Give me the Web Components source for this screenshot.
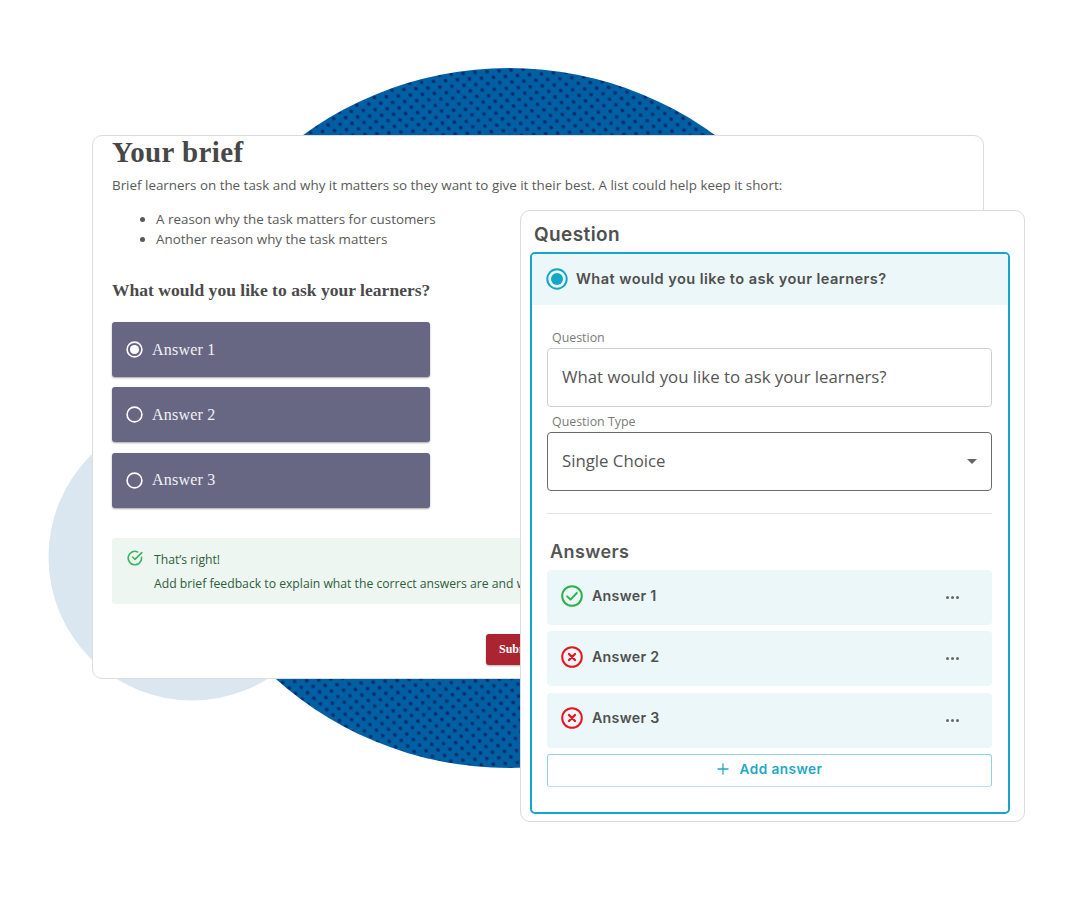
<!DOCTYPE html>
<html><head><meta charset="utf-8">
<style>
html,body{margin:0;padding:0;background:#fff;}
body{width:1067px;height:916px;overflow:hidden;font-family:"Open Sans",sans-serif;color:#4d4d4d;}
</style></head>
<body>
<promo-stage>
  <backdrop-art slot="art"></backdrop-art>
  <brief-card slot="brief"></brief-card>
  <question-card slot="question"></question-card>
</promo-stage>
<template id="tpl-brief">
<style>
:host{display:block;box-sizing:border-box;width:892px;height:544px;background:#fff;border:1px solid #dcdcdc;border-radius:10px;padding:0 19px;overflow:hidden;color:#4a4a4a;}
h1{font:700 29px/32px "Liberation Serif",serif;margin:0;color:#474747;height:32px;letter-spacing:.4px;}
p{margin:7px 0 0;font:400 13.4px/20px "Open Sans",sans-serif;white-space:nowrap;color:#595959;}
ul{margin:14px 0 0;padding:0 0 0 44px;font:400 13.4px/20px "Open Sans",sans-serif;color:#595959;}
h2{font:700 17.5px/22px "Liberation Serif",serif;margin:30px 0 0;color:#4a4a4a;letter-spacing:.03px;}
.opts{display:flex;flex-direction:column;gap:10.25px;margin-top:21px;width:318px;}
.fb{margin-top:30px;box-sizing:border-box;width:860px;height:66px;background:#edf6f0;border-radius:3px;padding:10px 15px;display:grid;grid-template-columns:27px 1fr;color:#2f5c40;font:400 12.2px/24px "Open Sans",sans-serif;white-space:nowrap;}
.fb svg{display:block;margin-top:2px;}
.sub{margin:30px 0 0 374px;width:80px;height:31px;background:#ab2432;border-radius:3px;box-shadow:0 1px 2px rgba(0,0,0,.3);color:#fff;font:700 12px/30px "Liberation Serif",serif;padding-left:13px;box-sizing:border-box;}
</style>
<h1>Your brief</h1>
<p>Brief learners on the task and why it matters so they want to give it their best. A list could help keep it short:</p>
<ul><li>A reason why the task matters for customers</li><li>Another reason why the task matters</li></ul>
<h2>What would you like to ask your learners?</h2>
<div class="opts">
<answer-option selected>Answer 1</answer-option>
<answer-option>Answer 2</answer-option>
<answer-option>Answer 3</answer-option>
</div>
<div class="fb">
<svg width="16" height="16" viewBox="0 0 16 16" fill="none" stroke="#3fb45f" stroke-width="1.6" stroke-linecap="round" stroke-linejoin="round"><path d="M14.6 7.2v.8a6.7 6.7 0 1 1-4-6.1"/><path d="M14.8 2.6 8 9.4 5.6 7"/></svg>
<div>That’s right!</div>
<div></div>
<div>Add brief feedback to explain what the correct answers are and why</div>
</div>
<div class="sub">Submit</div>
</template>
<template id="tpl-option">
<style>
:host{display:flex;align-items:center;box-sizing:border-box;height:55px;background:#676784;border-radius:3px;box-shadow:0 1px 2px rgba(0,0,0,.35);padding-left:14px;gap:9px;color:#f1f1f5;font:400 16px/20px "Liberation Serif",serif;letter-spacing:.2px;}
svg{display:block;flex:none;}
circle.dot{display:none;}
:host([selected]) circle.dot{display:block;}
</style>
<svg width="17" height="17" viewBox="0 0 17 17"><circle cx="8.5" cy="8.5" r="7.4" fill="none" stroke="#fff" stroke-width="1.6"/><circle class="dot" cx="8.5" cy="8.5" r="4.6" fill="#fff"/></svg>
<slot></slot>
</template>
<template id="tpl-question">
<style>
:host{display:block;box-sizing:border-box;width:505px;height:612px;background:#fff;border:1px solid #dcdcdc;border-radius:10px;padding:12px 14px 9px 9px;color:#4f4f4f;}
h3{margin:0;padding-left:4px;font:600 19px/24px "Inter",sans-serif;letter-spacing:.4px;color:#4f4f4f;height:29px;}
.frame{box-sizing:border-box;height:562px;border:2px solid #16a5c6;border-radius:5px;overflow:hidden;}
.head{box-sizing:border-box;height:51px;background:#ebf7f8;display:flex;align-items:center;gap:8px;padding:0 0 2px 14px;font:600 14.6px/20px "Inter",sans-serif;letter-spacing:.43px;color:#4f4f4f;}
.body{padding:0 16px 0 15px;}
.div{height:1px;background:#e2e2e2;margin:22px 0 0;}
h4{margin:26px 0 0;padding-left:3px;font:600 18px/24px "Inter",sans-serif;letter-spacing:.4px;color:#555;height:21px;}
.rows{display:flex;flex-direction:column;gap:6.25px;margin-top:9px;}
.add{box-sizing:border-box;margin-top:6.5px;height:32.5px;border:1px solid #8ed5e5;border-bottom-color:#b5e3ec;border-radius:3px;display:flex;align-items:center;justify-content:center;gap:11px;color:#1ea8c8;font:600 13.6px/20px "Inter",sans-serif;letter-spacing:.45px;padding-bottom:3px;}
svg{display:block;flex:none;}
</style>
<h3>Question</h3>
<div class="frame">
<div class="head"><svg width="22" height="22" viewBox="0 0 22 22"><circle cx="11" cy="11" r="9.7" fill="none" stroke="#16a5c6" stroke-width="2"/><circle cx="11" cy="11" r="6" fill="#16a5c6"/></svg><span>What would you like to ask your learners?</span></div>
<div class="body">
<form-field label="Question" value="What would you like to ask your learners?"></form-field>
<form-field label="Question Type" value="Single Choice" select></form-field>
<div class="div"></div>
<h4>Answers</h4>
<div class="rows">
<answer-row state="ok">Answer 1</answer-row>
<answer-row state="bad">Answer 2</answer-row>
<answer-row state="bad">Answer 3</answer-row>
</div>
<div class="add"><svg width="12" height="12" viewBox="0 0 12 12" stroke="#1ea8c8" stroke-width="1.3" fill="none"><path d="M6 .5v11M.5 6h11"/></svg><span>Add answer</span></div>
</div>
</div>
</template>
<template id="tpl-field">
<style>
:host{display:block;}
label{display:block;padding-left:5px;font:400 12.4px/16px "Open Sans",sans-serif;color:#7a7a7a;height:18px;}
.box{box-sizing:border-box;height:59px;border:1px solid #cfcfcf;border-radius:4px;display:flex;align-items:center;justify-content:space-between;padding:0 14px 2px;font:400 16.8px/22px "Open Sans",sans-serif;color:#555;}
:host([select]) .box{border-color:#6b6b6b;}
:host([select]) label{margin-top:7px;}
:host(:not([select])) label{margin-top:25px;}
.car{display:none;width:0;height:0;border-left:5px solid transparent;border-right:5px solid transparent;border-top:5px solid #666;margin-top:2px;}
:host([select]) .car{display:block;}
</style>
<label></label><div class="box"><span class="v"></span><i class="car"></i></div>
</template>
<template id="tpl-row">
<style>
:host{display:flex;align-items:flex-start;box-sizing:border-box;height:55px;background:#ebf7f8;border-radius:4px;padding:14.5px 0 0 14px;gap:9px;font:600 14.2px/22px "Inter",sans-serif;letter-spacing:.3px;color:#4f4f4f;}
svg{display:block;flex:none;}
.txt{flex:1;}
.more{margin-right:33px;display:flex;gap:2px;margin-top:11.5px;}
.more i{width:3px;height:3px;border-radius:50%;background:#666;display:block;}
</style>
<span class="ic"></span><span class="txt"><slot></slot></span><span class="more"><i></i><i></i><i></i></span>
</template>
<script>
const tpl=id=>document.getElementById(id).content.cloneNode(true);
class PromoStage extends HTMLElement{constructor(){super();this.attachShadow({mode:'open'}).innerHTML=`<style>
:host{display:block;position:relative;width:1067px;height:916px;overflow:hidden;}
::slotted([slot=art]){position:absolute;left:0;top:0;}
::slotted([slot=brief]){position:absolute;left:92px;top:135px;}
::slotted([slot=question]){position:absolute;left:520px;top:210px;}
</style><slot name="art"></slot><slot name="brief"></slot><slot name="question"></slot>`;}}
class BackdropArt extends HTMLElement{constructor(){super();this.attachShadow({mode:'open'}).innerHTML=`<style>:host{display:block;width:1067px;height:916px;}svg{display:block;}</style>
<svg width="1067" height="916" viewBox="0 0 1067 916"><defs><pattern id="d" width="8.5" height="8.5" patternUnits="userSpaceOnUse" patternTransform="translate(512.3 88) rotate(41)"><rect width="8.5" height="8.5" fill="#0060a3"/><circle cx="4.25" cy="4.25" r="2" fill="#0a2f6e"/></pattern></defs>
<circle cx="192" cy="557" r="143.5" fill="#dae7f1"/><circle cx="509" cy="418" r="350" fill="url(#d)"/></svg>`;}}
class BriefCard extends HTMLElement{constructor(){super();this.attachShadow({mode:'open'}).appendChild(tpl('tpl-brief'));}}
class AnswerOption extends HTMLElement{constructor(){super();this.attachShadow({mode:'open'}).appendChild(tpl('tpl-option'));}}
class QuestionCard extends HTMLElement{constructor(){super();this.attachShadow({mode:'open'}).appendChild(tpl('tpl-question'));}}
class FormField extends HTMLElement{connectedCallback(){if(this.shadowRoot)return;const s=this.attachShadow({mode:'open'});s.appendChild(tpl('tpl-field'));s.querySelector('label').textContent=this.getAttribute('label');s.querySelector('.v').textContent=this.getAttribute('value');}}
class AnswerRow extends HTMLElement{connectedCallback(){if(this.shadowRoot)return;const s=this.attachShadow({mode:'open'});s.appendChild(tpl('tpl-row'));
s.querySelector('.ic').innerHTML=this.getAttribute('state')==='ok'
?'<svg width="22" height="22" viewBox="0 0 22 22" fill="none"><circle cx="11" cy="11" r="9.8" stroke="#2eb04a" stroke-width="2"/><path d="M6.2 11.3l3.3 3.3 6.3-6.6" stroke="#2eb04a" stroke-width="1.9" stroke-linecap="round" stroke-linejoin="round"/></svg>'
:'<svg width="22" height="22" viewBox="0 0 22 22" fill="none"><circle cx="11" cy="11" r="9.8" stroke="#e8141f" stroke-width="2"/><path d="M8 8l6 6M14 8l-6 6" stroke="#e8141f" stroke-width="2.4" stroke-linecap="round"/></svg>';}}
customElements.define('promo-stage',PromoStage);
customElements.define('backdrop-art',BackdropArt);
customElements.define('answer-option',AnswerOption);
customElements.define('form-field',FormField);
customElements.define('answer-row',AnswerRow);
customElements.define('brief-card',BriefCard);
customElements.define('question-card',QuestionCard);
</script>
</body></html>
